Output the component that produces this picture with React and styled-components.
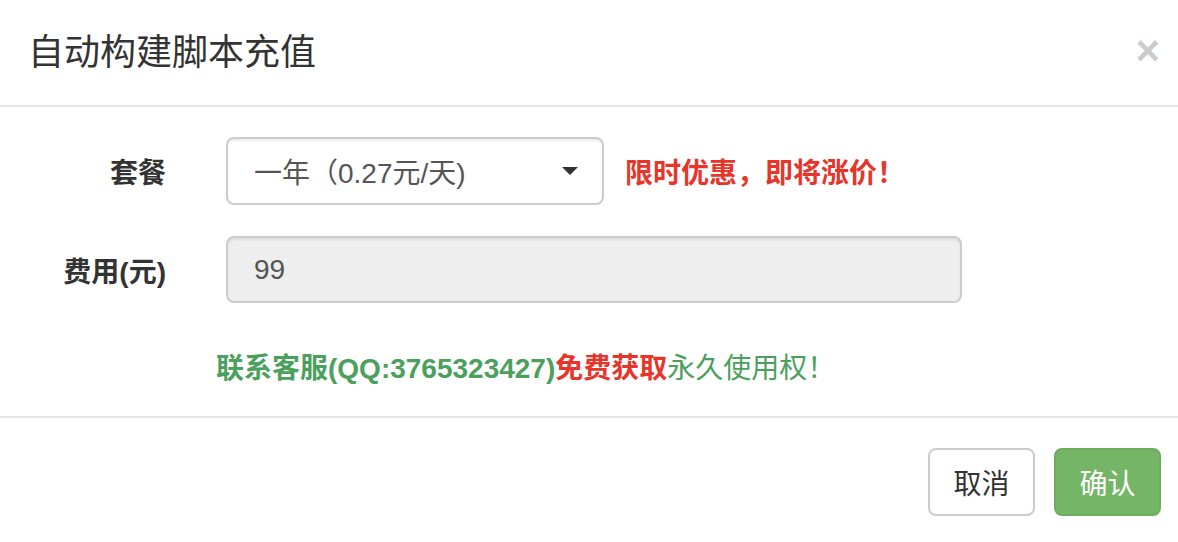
import React from "react";
import styled, { createGlobalStyle } from "styled-components";

const GlobalStyle = createGlobalStyle`
  html, body {
    margin: 0;
    padding: 0;
    background: #fff;
  }
  body {
    font-family: "Liberation Sans", "Noto Sans CJK SC", sans-serif;
    color: #333;
  }
`;

const Modal = styled.div`
  width: 1178px;
  height: 542px;
  background: #fff;
  display: flex;
  flex-direction: column;
`;

const Header = styled.div`
  display: flex;
  align-items: center;
  justify-content: space-between;
  padding: 30px 18px 30px 28px;
  height: 45px;
  border-bottom: 2px solid #e5e5e5;
`;

const Title = styled.h4`
  margin: 0;
  font-size: 36px;
  font-weight: 400;
  line-height: 45px;
  color: #333;
`;

const Close = styled.button`
  border: 0;
  background: none;
  padding: 0;
  font-family: "Liberation Sans", sans-serif;
  font-size: 42px;
  font-weight: 700;
  line-height: 1;
  color: #000;
  opacity: 0.2;
  cursor: pointer;
  margin-top: -4px;
`;

const Body = styled.div`
  padding: 30px 30px 27px;
`;

const Row = styled.div`
  display: grid;
  grid-template-columns: 136px auto 1fr;
  column-gap: 60px;
  align-items: center;
  margin-bottom: ${(p) => p.$gap || 31}px;
`;

const Label = styled.label`
  text-align: right;
  font-size: 28px;
  font-weight: 700;
  color: #333;
`;

const Control = styled.div`
  display: flex;
  align-items: center;
  gap: 21px;
`;

const Box = styled.div`
  box-sizing: border-box;
  width: ${(p) => p.$width}px;
  height: ${(p) => p.$height || 68}px;
  display: flex;
  align-items: center;
  justify-content: space-between;
  padding: 0 24px 0 26px;
  border: 2px solid #ccc;
  border-radius: 8px;
  background: ${(p) => (p.$disabled ? "#eee" : "#fff")};
  font-size: 28px;
  color: #555;
  box-shadow: inset 0 2px 2px rgba(0, 0, 0, 0.075);
`;

const Caret = styled.span`
  width: 0;
  height: 0;
  border-left: 8px solid transparent;
  border-right: 8px solid transparent;
  border-top: 8px solid #333;
`;

const Hot = styled.span`
  font-size: 28px;
  font-weight: 700;
  color: #e8352a;
`;

const Note = styled.p`
  margin: 0 0 0 186px;
  font-size: 28px;
  line-height: 40px;
  color: #4aa05c;
`;

const Part = styled.span`
  font-weight: ${(p) => (p.$bold ? 700 : 400)};
  color: ${(p) => (p.$red ? "#e8352a" : "#4aa05c")};
`;

const Footer = styled.div`
  border-top: 2px solid #e5e5e5;
  display: flex;
  justify-content: flex-end;
  gap: 19px;
  padding: 30px 17px 0 0;
`;

const Button = styled.button`
  box-sizing: border-box;
  width: 107px;
  height: 68px;
  border-radius: 8px;
  font-family: "Liberation Sans", "Noto Sans CJK SC", sans-serif;
  font-size: 28px;
  cursor: pointer;
  border: 2px solid ${(p) => (p.$primary ? "#6cad60" : "#ccc")};
  background: ${(p) => (p.$primary ? "#74b566" : "#fff")};
  color: ${(p) => (p.$primary ? "#fff" : "#333")};
`;

export default function App() {
  return (
    <>
      <GlobalStyle />
      <Modal>
        <Header>
          <Title>自动构建脚本充值</Title>
          <Close aria-label="close">×</Close>
        </Header>
        <Body>
          <Row>
            <Label>套餐</Label>
            <Control>
              <Box $width={378}>
                <span>一年（0.27元/天)</span>
                <Caret />
              </Box>
              <Hot>限时优惠，即将涨价！</Hot>
            </Control>
          </Row>
          <Row $gap={46}>
            <Label>费用(元)</Label>
            <Box $width={736} $height={67} $disabled>
              <span>99</span>
            </Box>
          </Row>
          <Note>
            <Part $bold>联系客服(QQ:3765323427)</Part>
            <Part $bold $red>
              免费获取
            </Part>
            <Part>永久使用权！</Part>
          </Note>
        </Body>
        <Footer>
          <Button>取消</Button>
          <Button $primary>确认</Button>
        </Footer>
      </Modal>
    </>
  );
}
